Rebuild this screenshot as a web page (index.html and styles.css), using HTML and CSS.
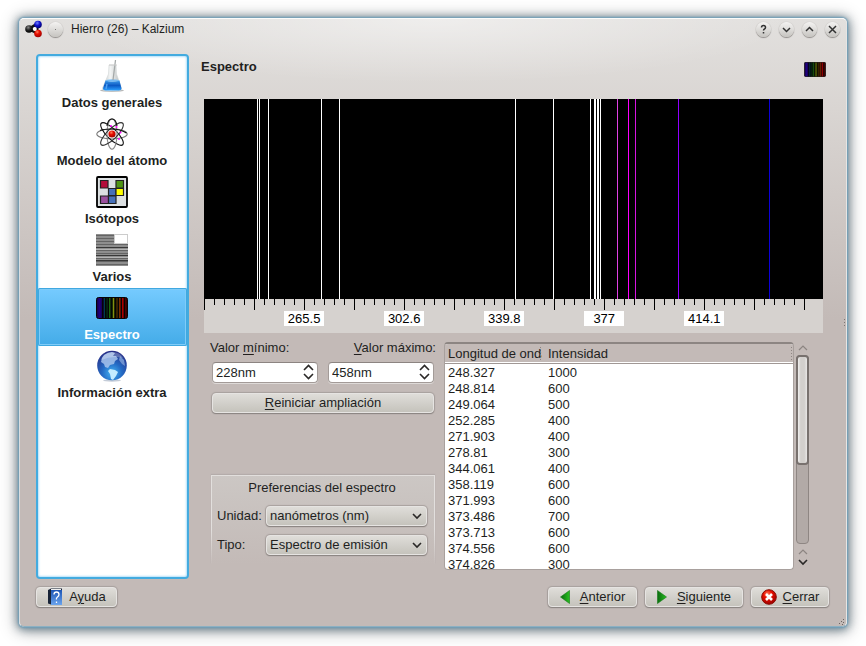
FILE: index.html
```html
<!DOCTYPE html>
<html lang="es">
<head>
<meta charset="utf-8">
<title>Hierro (26) – Kalzium</title>
<link rel="stylesheet" href="styles.css">
</head>
<body>
<svg class="defs" width="0" height="0" aria-hidden="true">
  <defs>
    <linearGradient id="band">
      <stop offset="0" stop-color="#14003c"/><stop offset=".1" stop-color="#200080"/><stop offset=".2" stop-color="#100048"/>
      <stop offset=".28" stop-color="#001010"/><stop offset=".4" stop-color="#0a3010"/><stop offset=".55" stop-color="#202c00"/>
      <stop offset=".68" stop-color="#3c2000"/><stop offset=".85" stop-color="#780000"/><stop offset="1" stop-color="#280000"/>
    </linearGradient>
    <linearGradient id="water" x2="0" y2="1"><stop offset="0" stop-color="#3d9bea"/><stop offset=".5" stop-color="#0b59c4"/><stop offset="1" stop-color="#2aa0ff"/></linearGradient>
    <linearGradient id="glass"><stop offset="0" stop-color="#b8bcbc"/><stop offset=".4" stop-color="#f4f6f6"/><stop offset="1" stop-color="#b4b8b8"/></linearGradient>
    <radialGradient id="red" cx=".4" cy=".3" r=".7"><stop offset="0" stop-color="#ff8060"/><stop offset=".4" stop-color="#e81000"/><stop offset="1" stop-color="#a00000"/></radialGradient>
    <radialGradient id="blue" cx=".4" cy=".3" r=".7"><stop offset="0" stop-color="#7080ff"/><stop offset=".5" stop-color="#1010c8"/><stop offset="1" stop-color="#000070"/></radialGradient>
    <radialGradient id="coal" cx=".4" cy=".3" r=".7"><stop offset="0" stop-color="#888"/><stop offset=".5" stop-color="#222"/><stop offset="1" stop-color="#000"/></radialGradient>
    <radialGradient id="ocean" cx=".5" cy=".75" r=".75"><stop offset="0" stop-color="#45b4f4"/><stop offset=".45" stop-color="#246ac4"/><stop offset="1" stop-color="#282c84"/></radialGradient>
    <linearGradient id="green" x2="1"><stop offset="0" stop-color="#0a6a10"/><stop offset="1" stop-color="#28c020"/></linearGradient>
    <linearGradient id="book" x2="0" y2="1"><stop offset="0" stop-color="#1c55b4"/><stop offset="1" stop-color="#6aa4ee"/></linearGradient>
    <symbol id="spectrum-icon" viewBox="0 0 32 22">
      <rect x=".5" y=".5" width="31" height="21" rx="2" fill="url(#band)" stroke="#080404"/>
      <path d="M6.500 1v20M9.500 1v20M12.500 1v20M15.500 1v20M19.500 1v20M22.500 1v20M25.500 1v20M28.500 1v20" stroke="#050505"/>
      <path d="M8.500 1v20" stroke="#004048"/><path d="M13.500 1v20" stroke="#1c6a10"/><path d="M17.500 1v20" stroke="#849010"/><path d="M23.500 1v20" stroke="#7a3000"/><path d="M26.500 1v20" stroke="#a00"/>
    </symbol>
  </defs>
</svg>

<div class="window">
  <header class="titlebar">
    <svg class="app-icon" viewBox="0 0 18 18" aria-hidden="true">
      <path d="M4 9l8-5M4 9l8 4M12 4v9" stroke="#111" stroke-width="3" fill="none"/>
      <circle cx="4" cy="9" r="3.800" fill="url(#coal)"/><circle cx="13" cy="4.500" r="3.800" fill="url(#blue)"/><circle cx="13" cy="13.500" r="3.800" fill="url(#red)"/><circle cx="9.800" cy="9" r="2" fill="#fff"/>
    </svg>
    <button class="round plain" type="button" aria-label="Fijar"><svg viewBox="0 0 15 15"><path d="M7 7.500h1"/></svg></button>
    <h1 class="title">Hierro (26) – Kalzium</h1>
    <div class="window-buttons">
      <button class="round" type="button" aria-label="Ayuda"><svg viewBox="0 0 15 15"><path d="M5.500 5.500q0-2 2-2t2 2q0 1-1 1.500t-1 1.500M7.500 10v1.500"/></svg></button>
      <button class="round" type="button" aria-label="Minimizar"><svg viewBox="0 0 15 15"><path d="M4 6l3.500 3.500 3.500-3.500"/></svg></button>
      <button class="round" type="button" aria-label="Maximizar"><svg viewBox="0 0 15 15"><path d="M4 9l3.500-3.500 3.500 3.500"/></svg></button>
      <button class="round" type="button" aria-label="Cerrar"><svg viewBox="0 0 15 15"><path d="M4 4l7 7M11 4l-7 7"/></svg></button>
    </div>
  </header>

  <div class="content">
    <nav class="sidebar">
      <a class="page" href="#datos">
        <svg class="page-icon" viewBox="0 0 32 32" aria-hidden="true">
          <ellipse cx="16" cy="30.500" rx="12" ry="1.500" fill="#b8b8b8"/>
          <path d="M13 5h7l.5 9 5 14q0 3-3 3h-13q-3 0-3-3l6-14z" fill="url(#glass)" stroke="#d2d6d6" stroke-width=".6"/>
          <path d="M9.500 20.500q6.500 2 14 0l2 8q0 2-2.500 2h-13.500q-2.500 0-2.500-2z" fill="url(#water)"/>
          <ellipse cx="16.500" cy="20.500" rx="7" ry="1.200" fill="#78bcf4"/>
          <path d="M19.500 0l-2.500 20" stroke="#a4a8a8" stroke-width="1.200"/><path d="M13 5h8" stroke="#ccc"/>
          <path d="M11 24l-1 5" stroke="#4ca0f4" stroke-width="1.500"/>
        </svg>
        <span>Datos generales</span>
      </a>
      <a class="page" href="#modelo">
        <svg class="page-icon" viewBox="0 0 32 32" aria-hidden="true">
          <g fill="none" stroke="#111" stroke-width="1.100">
            <ellipse cx="16" cy="16" rx="15.200" ry="5" stroke="#777"/>
            <ellipse cx="16" cy="16" rx="15.200" ry="5" transform="rotate(45 16 16)"/>
            <ellipse cx="16" cy="16" rx="15.200" ry="5" transform="rotate(90 16 16)" stroke="#888"/>
            <ellipse cx="16" cy="16" rx="15.200" ry="5" transform="rotate(135 16 16)" stroke="#333"/>
            <path d="M4 12.500Q8 11 16 11t14.500 4"/>
            <path d="M11 8Q12 1 16 1t5 7"/>
          </g>
          <circle cx="16" cy="16" r="3.600" fill="url(#red)"/>
          <g fill="#f0f"><circle cx="15" cy="8" r="1"/><circle cx="20.500" cy="9" r="1"/><circle cx="24.500" cy="14.500" r="1"/><circle cx="23" cy="21" r="1"/></g>
        </svg>
        <span>Modelo del átomo</span>
      </a>
      <a class="page" href="#isotopos">
        <svg class="page-icon" viewBox="0 0 32 32" aria-hidden="true">
          <rect x="1" y="1" width="30" height="30" rx="1" fill="#dce0e2" stroke="#000" stroke-width="1.800"/>
          <g stroke="#222" stroke-width="1.200"><path d="M4.500 4.500h7.500v7.500h-7.500z" fill="#b40c3a"/><path d="M20 4.500h7.500v7.500h-7.500z" fill="#4e9414"/><path d="M12.500 12.500h7.500v7h-7.500z" fill="#4670b8"/><path d="M20 12.500h7.500v7h-7.500z" fill="#ff0"/><path d="M4.500 20h8v7.500h-8z" fill="#9a509e"/><path d="M12.500 20h7.500v7.500h-7.500z" fill="#4670b8"/></g>
        </svg>
        <span>Isótopos</span>
      </a>
      <a class="page" href="#varios">
        <svg class="page-icon" viewBox="0 0 32 32" aria-hidden="true">
          <rect width="32" height="32" fill="#8e8e8e"/>
          <path d="M0 1.500h32M0 4.500h32M0 7.500h32M0 10.500h32M0 13.500h32M0 16.500h32M0 19.500h32M0 24.500h32M0 27.500h32M0 30.500h32" stroke="#646464"/>
          <path d="M0 13.500h32M0 21.500h32M0 26.500h32" stroke="#383838"/>
          <path d="M0 15.500h32M0 23.500h32" stroke="#b4b4b4"/>
          <rect x="18.500" y="0.500" width="13" height="9" fill="#fff" stroke="#ccc"/>
        </svg>
        <span>Varios</span>
      </a>
      <a class="page selected" href="#espectro" aria-current="page">
        <svg class="page-icon" viewBox="0 0 32 32" aria-hidden="true"><use href="#spectrum-icon" y="5" width="32" height="22"/></svg>
        <span>Espectro</span>
      </a>
      <a class="page" href="#extra">
        <svg class="page-icon" viewBox="0 0 32 32" aria-hidden="true">
          <ellipse cx="16" cy="30.500" rx="9" ry="1.200" fill="#c4ccd8"/>
          <circle cx="16" cy="15.500" r="14.800" fill="url(#ocean)"/>
          <path d="M8 5q4-3 8-3l3 1-2 3 3 0 2 3-3 2-1 3-4 1-2 3-3-1-1-3-3-2 1-4z" fill="#a8c4ec" opacity=".85"/>
          <path d="M14 19l5 1 3 2-2 4-3 4-2-1-1-5-2-3z" fill="#c4ecff"/>
          <path d="M24 6l4 4 1 6-3-2-3-4z" fill="#6e92d0"/>
          <path d="M5 10q2-7 11-8 8 0 11 6-10-3-22 2z" fill="#fff" opacity=".25"/>
        </svg>
        <span>Información extra</span>
      </a>
    </nav>

    <main class="main">
      <div class="page-header">
        <h2>Espectro</h2>
        <svg class="header-icon" viewBox="0 0 32 22" preserveAspectRatio="none" aria-hidden="true"><use href="#spectrum-icon" width="32" height="22"/></svg>
      </div>

      <figure class="spectrum">
        <svg class="lines" viewBox="0 0 619 212" preserveAspectRatio="none" role="img" aria-label="Espectro de emisión del hierro">
          <rect width="619" height="200"/>
          <path d="M53.500 0v200M55.500 0v200M64.500 0v200M117.500 0v200M135.500 0v200M311.500 0v200M349.500 0v200M386.500 0v200M390.500 0v200M391.500 0v200M393.500 0v200M394.500 0v200M396.500 0v200" stroke="#fff"/>
          <path d="M413.500 0v200" stroke="#e040e4"/><path d="M424.500 0v200" stroke="#f0f"/><path d="M431.500 0v200" stroke="#d614e0"/><path d="M474.500 0v200" stroke="#9000ff"/><path d="M565.500 0v200" stroke="#0c00d8"/>
          <path d="M10.500 200v6M20.500 200v6M30.500 200v6M40.500 200v6M60.500 200v6M70.500 200v6M80.500 200v6M90.500 200v6M110.500 200v6M120.500 200v6M130.500 200v6M140.500 200v6M160.500 200v6M170.500 200v6M180.500 200v6M190.500 200v6M210.500 200v6M220.500 200v6M230.500 200v6M240.500 200v6M260.500 200v6M270.500 200v6M280.500 200v6M290.500 200v6M310.500 200v6M320.500 200v6M330.500 200v6M340.500 200v6M360.500 200v6M370.500 200v6M380.500 200v6M390.500 200v6M410.500 200v6M420.500 200v6M430.500 200v6M440.500 200v6M460.500 200v6M470.500 200v6M480.500 200v6M490.500 200v6M510.500 200v6M520.500 200v6M530.500 200v6M540.500 200v6M560.500 200v6M570.500 200v6M580.500 200v6M590.500 200v6" stroke="#000"/>
          <path d="M.5 200v11M50.500 200v11M100.500 200v11M150.500 200v11M200.500 200v11M250.500 200v11M300.500 200v11M350.500 200v11M400.500 200v11M450.500 200v11M500.500 200v11M550.500 200v11M600.500 200v11" stroke="#000"/>
        </svg>
        <figcaption class="scale"><span>265.5</span><span>302.6</span><span>339.8</span><span>377</span><span>414.1</span></figcaption>
      </figure>

      <div class="lower">
        <form class="controls">
          <div class="range">
            <div class="field">
              <label for="min">Valor <u>m</u>ínimo:</label>
              <div class="spin"><input id="min" type="text" value="228nm"><svg viewBox="0 0 11 16" aria-hidden="true"><path d="M1 6l4.500-4.500 4.500 4.500M1 10l4.500 4.500 4.500-4.500"/></svg></div>
            </div>
            <div class="field right">
              <label for="max"><u>V</u>alor máximo:</label>
              <div class="spin"><input id="max" type="text" value="458nm"><svg viewBox="0 0 11 16" aria-hidden="true"><path d="M1 6l4.500-4.500 4.500 4.500M1 10l4.500 4.500 4.500-4.500"/></svg></div>
            </div>
          </div>
          <button class="btn reset" type="button"><span><u>R</u>einiciar ampliación</span></button>
          <fieldset class="prefs">
            <legend>Preferencias del espectro</legend>
            <label for="unit">Unidad:</label>
            <div class="combo"><select id="unit"><option>nanómetros (nm)</option></select><svg viewBox="0 0 10 7" aria-hidden="true"><path d="M1 1l4 4 4-4"/></svg></div>
            <label for="type">Tipo:</label>
            <div class="combo"><select id="type"><option>Espectro de emisión</option></select><svg viewBox="0 0 10 7" aria-hidden="true"><path d="M1 1l4 4 4-4"/></svg></div>
          </fieldset>
        </form>

        <div class="list">
          <table>
            <thead><tr><th class="wave"><div>Longitud de onda</div></th><th><div>Intensidad</div></th></tr></thead>
            <tbody>
              <tr><td>248.327</td><td>1000</td></tr>
              <tr><td>248.814</td><td>600</td></tr>
              <tr><td>249.064</td><td>500</td></tr>
              <tr><td>252.285</td><td>400</td></tr>
              <tr><td>271.903</td><td>400</td></tr>
              <tr><td>278.81</td><td>300</td></tr>
              <tr><td>344.061</td><td>400</td></tr>
              <tr><td>358.119</td><td>600</td></tr>
              <tr><td>371.993</td><td>600</td></tr>
              <tr><td>373.486</td><td>700</td></tr>
              <tr><td>373.713</td><td>600</td></tr>
              <tr><td>374.556</td><td>600</td></tr>
              <tr><td>374.826</td><td>300</td></tr>
            </tbody>
          </table>
        </div>
        <div class="scrollbar" aria-hidden="true">
          <svg class="arrow dim" viewBox="0 0 10 7"><path d="M1 6l4-4 4 4"/></svg>
          <div class="track"><div class="thumb"></div></div>
          <svg class="arrow dim" viewBox="0 0 10 7"><path d="M1 6l4-4 4 4"/></svg>
          <svg class="arrow" viewBox="0 0 10 7"><path d="M1 1l4 4 4-4"/></svg>
        </div>
      </div>
    </main>
  </div>

  <footer class="footer">
    <button class="btn help" type="button">
      <svg width="16" height="18" viewBox="0 0 16 18" aria-hidden="true"><path d="M1 2l3-1.500h11v2h-11v14l-3-1z" fill="#182438"/><rect x="4" y="2" width="11" height="15" fill="url(#book)"/><path d="M4 1.500h10" stroke="#eee"/><path d="M7 6.500q0-2.500 2.500-2.500t2.500 2.500q0 1.500-1.500 2.500t-1 2.500M9.500 13.500v1.500" fill="none" stroke="#fff" stroke-width="1.300"/></svg>
      <span>A<u>y</u>uda</span>
    </button>
    <button class="btn prev" type="button">
      <svg width="10" height="14" viewBox="0 0 10 14" aria-hidden="true"><path d="M9.500.5v13l-9-6.500z" fill="url(#green)" stroke="#127a14" stroke-width=".6"/></svg>
      <span><u>A</u>nterior</span>
    </button>
    <button class="btn next" type="button">
      <svg width="10" height="14" viewBox="0 0 10 14" aria-hidden="true"><path d="M.5.5v13l9-6.500z" fill="url(#green)" stroke="#127a14" stroke-width=".6"/></svg>
      <span><u>S</u>iguiente</span>
    </button>
    <button class="btn close" type="button">
      <svg width="16" height="16" viewBox="0 0 16 16" aria-hidden="true"><circle cx="8" cy="8" r="7.300" fill="url(#red)" stroke="#8a0c04"/><path d="M5 5l6 6M11 5l-6 6" stroke="#fff" stroke-width="2.600"/></svg>
      <span><u>C</u>errar</span>
    </button>
  </footer>
  <svg class="resize" viewBox="0 0 6 6" aria-hidden="true"><path d="M4 0h1v1h-1zM2 2h1v1h-1zM4 3h1v1h-1zM0 4h1v1h-1zM3 5h1v1h-1z" fill="#6c6461"/></svg>
  <svg class="side-grip" viewBox="0 0 2 8" aria-hidden="true"><path d="M0 0h1v1h-1zM0 3h1v1h-1zM0 6h1v1h-1z" fill="#7e7673"/></svg>
</div>
</body>
</html>
```
FILE: styles.css
```css
* {
  box-sizing: border-box;
}

body {
  margin: 0;
  min-height: 100vh;
  padding: 18px 19px 20px;
  display: flex;
  background: #fff;
  color: #221f1e;
  font: 13px/16px "Liberation Sans", Arial, sans-serif;
}

.defs {
  position: absolute;
}

h1, h2, figure, fieldset {
  margin: 0;
  font-size: inherit;
}

input, select, button {
  font: inherit;
  color: inherit;
  margin: 0;
}

u {
  text-underline-offset: 2px;
}

.window {
  position: relative;
  flex: 1;
  display: flex;
  flex-direction: column;
  min-width: 0;
  padding-bottom: 19px;
  border: 1px solid;
  border-color: #fbfbfa #e6e5e4 #8cb0c2 #d8dde0;
  border-radius: 5px;
  background:
    radial-gradient(ellipse 360px 64px at 50% 0, rgba(255, 255, 255, .45), transparent),
    linear-gradient(#e2e0de, #d9d5d2 90px, #c3bab7 300px);
  box-shadow: 0 0 2px 1px #6e9fba, 0 1px 8px 2px rgba(60, 90, 108, .65), 0 2px 18px 2px rgba(0, 0, 0, .3);
}

.titlebar {
  display: flex;
  align-items: center;
  height: 20px;
  padding: 0 6px 0 5px;
}

.app-icon {
  width: 18px;
  height: 18px;
  margin-right: 5px;
}

.title {
  margin-left: 8px;
  font-size: 12px;
  font-weight: normal;
}

.window-buttons {
  display: flex;
  gap: 8px;
  margin-left: auto;
}

.round {
  width: 15px;
  height: 15px;
  padding: 0;
  border: 0;
  border-radius: 50%;
  background: linear-gradient(#f4f3f2, #c6c4c0);
  box-shadow: 0 0 1px #aaa6a3, 0 1px 1px #8f8b88;
}

.round svg {
  display: block;
  fill: none;
  stroke: #333;
  stroke-width: 1.5;
}

.plain svg {
  stroke: #777;
  stroke-width: 1;
}

.content {
  flex: 1;
  display: flex;
  gap: 12px;
  padding: 15px 16px 0;
}

.sidebar {
  flex: 0 0 153px;
  border: 2px solid #43abdf;
  border-radius: 4px;
  background: #fff;
  box-shadow: inset 0 0 2px 1px #b4e0fa;
}

.page {
  display: flex;
  flex-direction: column;
  align-items: center;
  gap: 3px;
  height: 58px;
  padding: 4px 1px 0 0;
  color: #221f1e;
  font-weight: bold;
  text-decoration: none;
}

.page-icon {
  width: 32px;
  height: 32px;
}

.selected {
  color: #fff;
  background: linear-gradient(#76cbff, #43abe8);
  border-radius: 2px;
  box-shadow: inset 0 0 0 1px #40a8e0, inset 0 0 0 2px #80ccf8;
}

.main {
  flex: 1;
  min-width: 0;
  display: flex;
  flex-direction: column;
}

.page-header {
  display: flex;
  justify-content: space-between;
  height: 45px;
  padding: 5px 4px 0 0;
}

.header-icon {
  width: 22px;
  height: 15px;
  margin-top: 3px;
}

.spectrum {
  margin: 0 7px 0 3px;
  background: #d6d2cf;
}

.lines {
  display: block;
  width: 100%;
  height: 212px;
}

.scale {
  display: grid;
  grid-template-columns: repeat(5, 100fr);
  padding: 0 11.1% 7px 8.1%;
  justify-items: center;
}

.scale span {
  width: 40px;
  height: 15px;
  background: #fff;
  color: #000;
  text-align: center;
}

.lower {
  flex: 1;
  display: flex;
  padding: 9px 21px 9px 9px;
}

.controls {
  flex: 0 0 226px;
  display: flex;
  flex-direction: column;
  margin-right: 8px;
}

.range {
  display: flex;
  justify-content: space-between;
  padding: 0 2px;
}

.field {
  display: flex;
  flex-direction: column;
  gap: 6px;
}

.field label {
  margin: -2px -2px 0;
}

.right label {
  align-self: flex-end;
}

.spin, .combo {
  position: relative;
}

.spin input {
  display: block;
  width: 106px;
  height: 21px;
  padding: 0 3px;
  border: 1px solid #a39b98;
  border-top-color: #8c8481;
  border-radius: 4px;
  background: #fff;
  box-shadow: 0 1px #dedad8;
}

.spin svg {
  position: absolute;
  right: 4px;
  top: 2px;
  width: 11px;
  height: 16px;
  fill: none;
  stroke: #2a2827;
  stroke-width: 1.6;
}

.btn, .combo select {
  height: 20px;
  padding: 0 5px;
  border: 1px solid #e6e4e2;
  border-radius: 4px;
  background: linear-gradient(#dfddd9, #c5c3bc);
  box-shadow: 0 1px 1px #8a8481, 0 0 1px 1px #a8a19e;
}

.btn {
  display: flex;
  align-items: center;
  justify-content: center;
  white-space: nowrap;
}

.reset {
  margin: 10px 2px 0;
}

.prefs {
  display: grid;
  grid-template-columns: 43px 1fr;
  gap: 9px 6px;
  align-items: center;
  min-width: 0;
  height: 89px;
  margin: auto 1px 6px;
  padding: 4px 7px 0 5px;
  border: 1px solid #e2dfdd;
  border-bottom: 0;
  border-image: linear-gradient(#e2dfdd 60%, transparent) 1;
  background: linear-gradient(#ccc7c4, #c3bab7);
  box-shadow: 0 -1px 1px #b4acaa;
}

.prefs legend {
  float: left;
  grid-column: 1 / -1;
  width: 100%;
  padding: 0 0 1px;
  text-align: center;
}

.combo select {
  display: block;
  width: 100%;
  padding: 0 3px;
  appearance: none;
}

.combo svg {
  position: absolute;
  right: 5px;
  top: 7px;
  width: 10px;
  height: 7px;
  fill: none;
  stroke: #2a2827;
  stroke-width: 1.6;
  pointer-events: none;
}

.list {
  flex: 1;
  height: 228px;
  overflow: hidden;
  border: 1px solid #a8a09d;
  border-top: 2px solid #8c8582;
  border-radius: 4px;
  background: #fff;
}

table {
  width: 100%;
  border-collapse: collapse;
  table-layout: fixed;
}

th, td {
  padding: 0 3px;
  text-align: left;
}

th {
  height: 19px;
  padding: 2px 0 1px 3px;
  font-weight: normal;
  background: #c3bab7;
  box-shadow: inset 0 -1px #fff, 0 1px #a09895;
}

th div {
  height: 16px;
  overflow: hidden;
  white-space: nowrap;
  background: linear-gradient(#8e8683 1px, transparent 1px) right 1px top 4px / 1px 3px repeat-y;
}

th.wave {
  width: 100px;
}

th.wave div {
  margin-right: 3px;
}

td {
  height: 16px;
}

tbody::before {
  content: "";
  display: block;
  height: 2px;
}

.scrollbar {
  display: flex;
  flex-direction: column;
  align-items: center;
  gap: 4px;
  width: 13px;
  height: 228px;
  margin-left: 2px;
  padding: 2px 0 4px;
}

.arrow {
  width: 10px;
  height: 7px;
  fill: none;
  stroke: #2a2827;
  stroke-width: 1.6;
}

.dim {
  stroke: #8c8582;
  stroke-width: 1.2;
}

.track {
  flex: 1;
  width: 13px;
  border: 1px solid #8e8683;
  border-radius: 4px;
  background: #b2aaa7;
}

.thumb {
  height: 110px;
  margin: -1px;
  border: 2px solid #78716e;
  border-radius: 4px;
  background: linear-gradient(90deg, #f0efee, #d2cfcc 30%, #d2cfcc 70%, #e8e6e5);
}

.footer {
  display: flex;
  gap: 8px;
  padding: 8px 17px 0 16px;
}

.footer .btn {
  gap: 6px;
}

.help {
  width: 81px;
  margin-right: auto;
}

.prev {
  width: 89px;
}

.next {
  width: 98px;
}

.close {
  width: 78px;
}

.footer .prev, .footer .next {
  gap: 10px;
}

.resize {
  position: absolute;
  right: 1px;
  bottom: 1px;
  width: 6px;
  height: 6px;
}

.side-grip {
  position: absolute;
  right: 0;
  top: 300px;
  width: 2px;
  height: 8px;
}
```
